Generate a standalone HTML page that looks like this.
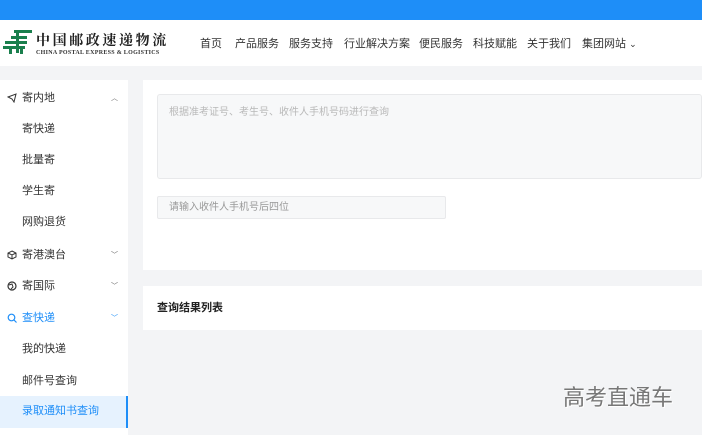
<!DOCTYPE html>
<html><head><meta charset="utf-8"><style>
*{margin:0;padding:0;box-sizing:border-box}
body{width:702px;height:435px;overflow:hidden;background:#f3f4f6;font-family:"Liberation Sans","Noto Sans CJK SC",sans-serif;position:relative;color:#333}
.top{position:absolute;left:0;top:0;width:702px;height:20px;background:#1e8ef8}
.hdr{position:absolute;left:0;top:20px;width:702px;height:46px;background:#fff}
.nav{position:absolute;top:35px;font-size:11px;color:#333;white-space:nowrap}
.nav span{position:absolute}
.side{position:absolute;left:0;top:80px;width:128px;height:355px;background:#fff}
.it{position:absolute;left:0;width:128px;height:31px;line-height:31px;font-size:11px;color:#333}
.sub{padding-left:22px}
.grp{padding-left:22px}
.ic{position:absolute;left:7px;top:10px;width:10px;height:10px}
.ch{position:absolute;right:10px;top:0;font-size:7px;color:#666}
.panel{position:absolute;left:143px;top:80px;width:559px;height:190px;background:#fff}
.ta{position:absolute;left:157px;top:94px;width:545px;height:85px;background:#f7f8f9;border:1px solid #e8e9eb;border-radius:3px;font-size:10px;color:#b8b8b8;padding:8px 11px}
.in{position:absolute;left:157px;top:196px;width:289px;height:23px;background:#f7f8f9;border:1px solid #e8e9eb;border-radius:2px;font-size:10px;color:#999;padding:0 11px;line-height:21px}
.res{position:absolute;left:143px;top:286px;width:559px;height:44px;background:#fff;font-size:11px;font-weight:bold;color:#222;padding:14px 14px;line-height:16px}
.wm{position:absolute;left:563px;top:380px;font-size:22px;color:#777;text-shadow:1px 1px 0 #fff}
</style></head><body>
<div class="top"></div>
<div class="hdr">
<svg style="position:absolute;left:3px;top:10px" width="30" height="26" viewBox="0 0 30 26">
<g fill="#1a7f4d"><rect x="11" y="0" width="18" height="3"/><rect x="8" y="6" width="16" height="3"/><rect x="2" y="11" width="22" height="3"/><rect x="0" y="16" width="22" height="3"/><rect x="13" y="3" width="3" height="20"/><rect x="6" y="19" width="3" height="5"/><rect x="17" y="19" width="3" height="5"/></g></svg>
<div style="position:absolute;left:36px;top:10px;font-family:'Noto Serif CJK SC',serif;font-size:14px;font-weight:bold;letter-spacing:2.6px;color:#222">中国邮政速递物流</div>
<div style="position:absolute;left:36px;top:30px;font-family:'Liberation Serif',serif;font-size:6px;font-weight:bold;color:#333;letter-spacing:0.3px">CHINA POSTAL EXPRESS &amp; LOGISTICS</div>
</div>
<div class="nav">
<span style="left:200px">首页</span><span style="left:235px">产品服务</span><span style="left:289px">服务支持</span><span style="left:344px">行业解决方案</span><span style="left:419px">便民服务</span><span style="left:473px">科技赋能</span><span style="left:527px">关于我们</span><span style="left:582px">集团网站 <span style="font-size:9px;position:static">&#8964;</span></span>
</div>
<div class="side">
<div class="it grp" style="top:3px"><svg class="ic" viewBox="0 0 10 10"><path d="M1 4L9 1 7 9 5 6Z" fill="none" stroke="#333" stroke-width="1"/></svg>寄内地<span class="ch">︿</span></div>
<div class="it sub" style="top:34px">寄快递</div>
<div class="it sub" style="top:65px">批量寄</div>
<div class="it sub" style="top:96px">学生寄</div>
<div class="it sub" style="top:127px">网购退货</div>
<div class="it grp" style="top:160px"><svg class="ic" viewBox="0 0 10 10"><path d="M5 1L9 3V7L5 9 1 7V3ZM1 3L5 5 9 3M5 5V9" fill="none" stroke="#333" stroke-width="1"/></svg>寄港澳台<span class="ch">﹀</span></div>
<div class="it grp" style="top:191px"><svg class="ic" viewBox="0 0 10 10"><circle cx="5" cy="5" r="4" fill="none" stroke="#333" stroke-width="1.2"/><path d="M2 4L5 3 6 6 4 8" fill="none" stroke="#333"/></svg>寄国际<span class="ch">﹀</span></div>
<div class="it grp" style="top:223px;color:#1e8ef8"><svg class="ic" viewBox="0 0 10 10"><circle cx="4.5" cy="4.5" r="3.3" fill="none" stroke="#1e8ef8" stroke-width="1.2"/><path d="M7 7L9.5 9.5" stroke="#1e8ef8" stroke-width="1.2"/></svg>查快递<span class="ch" style="color:#1e8ef8">﹀</span></div>
<div class="it sub" style="top:254px">我的快递</div>
<div class="it sub" style="top:286px">邮件号查询</div>
<div class="it sub" style="top:316px;height:32px;background:#e6f2fe;color:#1e8ef8;border-right:2px solid #1e8ef8">录取通知书查询</div>
</div>
<div class="panel"></div>
<div class="ta">根据准考证号、考生号、收件人手机号码进行查询</div>
<div class="in">请输入收件人手机号后四位</div>
<div class="res">查询结果列表</div>
<div class="wm">高考直通车</div>
</body></html>
